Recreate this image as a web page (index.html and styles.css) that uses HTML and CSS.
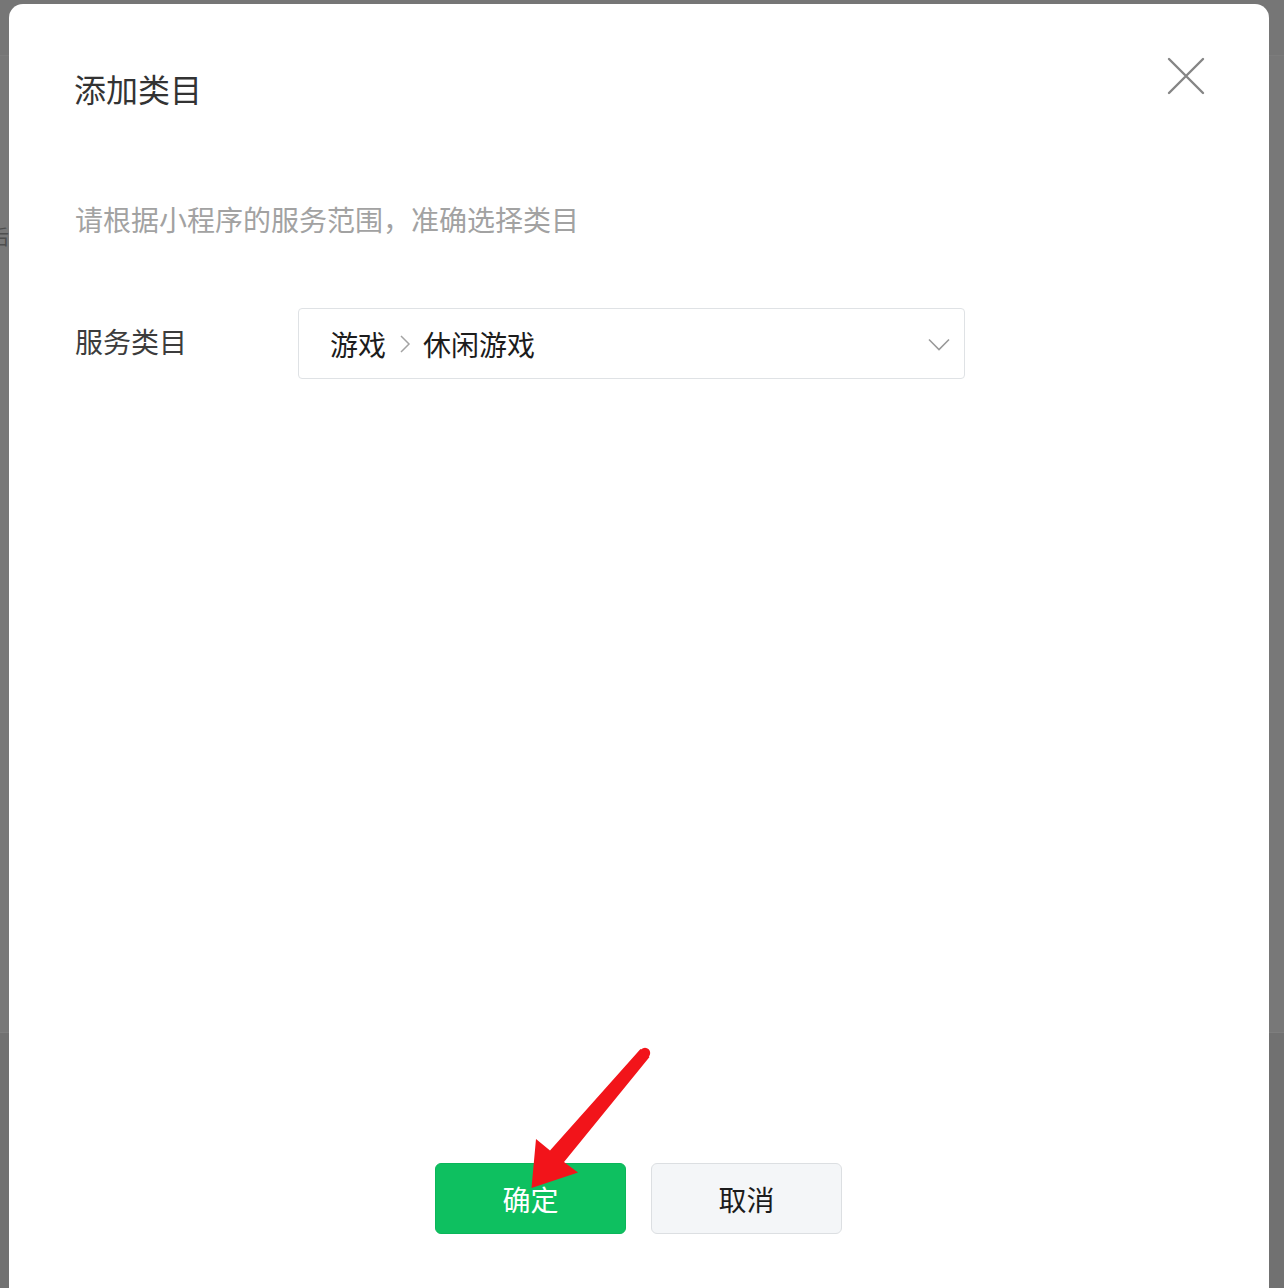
FILE: index.html
```html
<!DOCTYPE html>
<html lang="zh-CN">
<head>
<meta charset="utf-8">
<title>添加类目</title>
<link rel="stylesheet" href="styles.css">
</head>
<body>
<div class="page">
  <div class="page-head"></div>
  <div class="page-body"><span class="ghost">后</span></div>
  <div class="page-foot"></div>
</div>

<div class="modal">
  <div class="modal-head">
    <h1 class="modal-title">添加类目</h1>
    <button class="close" aria-label="关闭">
      <svg width="38" height="38" viewBox="0 0 38 38"><path d="M2 2 L36 36 M36 2 L2 36" stroke="#858585" stroke-width="2.4" stroke-linecap="round" fill="none"/></svg>
    </button>
  </div>
  <p class="modal-desc">请根据小程序的服务范围，准确选择类目</p>
  <div class="form-row">
    <label class="form-label">服务类目</label>
    <div class="select">
      <span class="select-value">游戏<svg class="sep" width="12" height="20" viewBox="0 0 12 20"><path d="M2 2 L10 10 L2 18" stroke="#a3a3a3" stroke-width="1.5" fill="none"/></svg>休闲游戏</span>
      <svg class="caret" width="24" height="15" viewBox="0 0 24 15"><path d="M2 2.5 L12 12.5 L22 2.5" stroke="#9a9a9a" stroke-width="1.6" fill="none"/></svg>
    </div>
  </div>
  <div class="actions">
    <button class="btn btn-primary">确定</button>
    <button class="btn btn-default">取消</button>
  </div>
</div>

<svg class="arrow" width="1284" height="1288" viewBox="0 0 1284 1288">
  <polygon points="640.5,1049 649.5,1057 564,1162 578,1172.5 531.5,1188 536,1139 550,1150.5" fill="#f2141a"/>
  <circle cx="645" cy="1053" r="5.2" fill="#f2141a"/>
</svg>
</body>
</html>
```

FILE: styles.css
```css
html, body {
  margin: 0;
  padding: 0;
}
body {
  width: 1284px;
  height: 1288px;
  overflow: hidden;
  position: relative;
  background: #727272;
  font-family: "Noto Sans CJK SC", "Noto Sans", sans-serif;
}
.page {
  display: flex;
  flex-direction: column;
  height: 1288px;
}
.page-head {
  height: 55px;
  background: #767676;
  border-bottom: 1px solid #7c7c7c;
}
.page-body {
  height: 976px;
  background: #787878;
  position: relative;
}
.ghost {
  display: block;
  margin-top: 168px;
  margin-left: -11px;
  font-size: 20px;
  line-height: 26px;
  color: #4e4e4e;
}
.page-foot {
  flex: 1;
  background: #717171;
  border-top: 1px solid #7e7e7e;
}

.modal {
  position: absolute;
  left: 9px;
  top: 4px;
  width: 1260px;
  height: 1330px;
  background: #ffffff;
  border-radius: 14px;
  box-sizing: border-box;
  padding: 53px 65px 0 65px;
}
.modal-head {
  display: flex;
  justify-content: space-between;
  align-items: flex-start;
}
.modal-title {
  margin: 9px 0 0 0;
  font-size: 32px;
  line-height: 44px;
  font-weight: 400;
  color: #333333;
}
.close {
  border: 0;
  background: none;
  padding: 0;
  margin: 0 -1px 0 0;
  width: 38px;
  height: 38px;
  display: flex;
}
.modal-desc {
  margin: 89px 0 0 1px;
  font-size: 28px;
  line-height: 40px;
  color: #a2a2a2;
}
.form-row {
  display: flex;
  align-items: center;
  margin-top: 69px;
}
.form-label {
  width: 224px;
  padding-left: 1px;
  box-sizing: border-box;
  font-size: 28px;
  line-height: 40px;
  color: #3c3c3c;
  margin-top: -5px;
}
.select {
  width: 667px;
  height: 71px;
  box-sizing: border-box;
  border: 1px solid #dfe2e5;
  border-radius: 4px;
  display: flex;
  align-items: center;
  justify-content: space-between;
  padding: 0 13px 0 31px;
}
.select-value {
  display: flex;
  align-items: center;
  font-size: 28px;
  line-height: 40px;
  color: #1c1c1c;
}
.sep {
  margin: 0 12px 0 13px;
}
.caret {
  margin-top: 1px;
}
.actions {
  display: flex;
  justify-content: center;
  gap: 25px;
  margin-top: 784px;
  margin-left: -1px;
}
.btn {
  width: 191px;
  height: 71px;
  border-radius: 6px;
  font-family: "Noto Sans CJK SC", "Noto Sans", sans-serif;
  font-size: 28px;
  line-height: 40px;
  padding: 0;
  box-sizing: border-box;
}
.btn-primary {
  background: #0ec060;
  border: 1px solid #0bb65a;
  color: #ffffff;
}
.btn-default {
  background: #f4f6f8;
  border: 1.5px solid #dcdfe2;
  color: #1c1c1c;
}
.arrow {
  position: absolute;
  left: 0;
  top: 0;
  pointer-events: none;
}
```
